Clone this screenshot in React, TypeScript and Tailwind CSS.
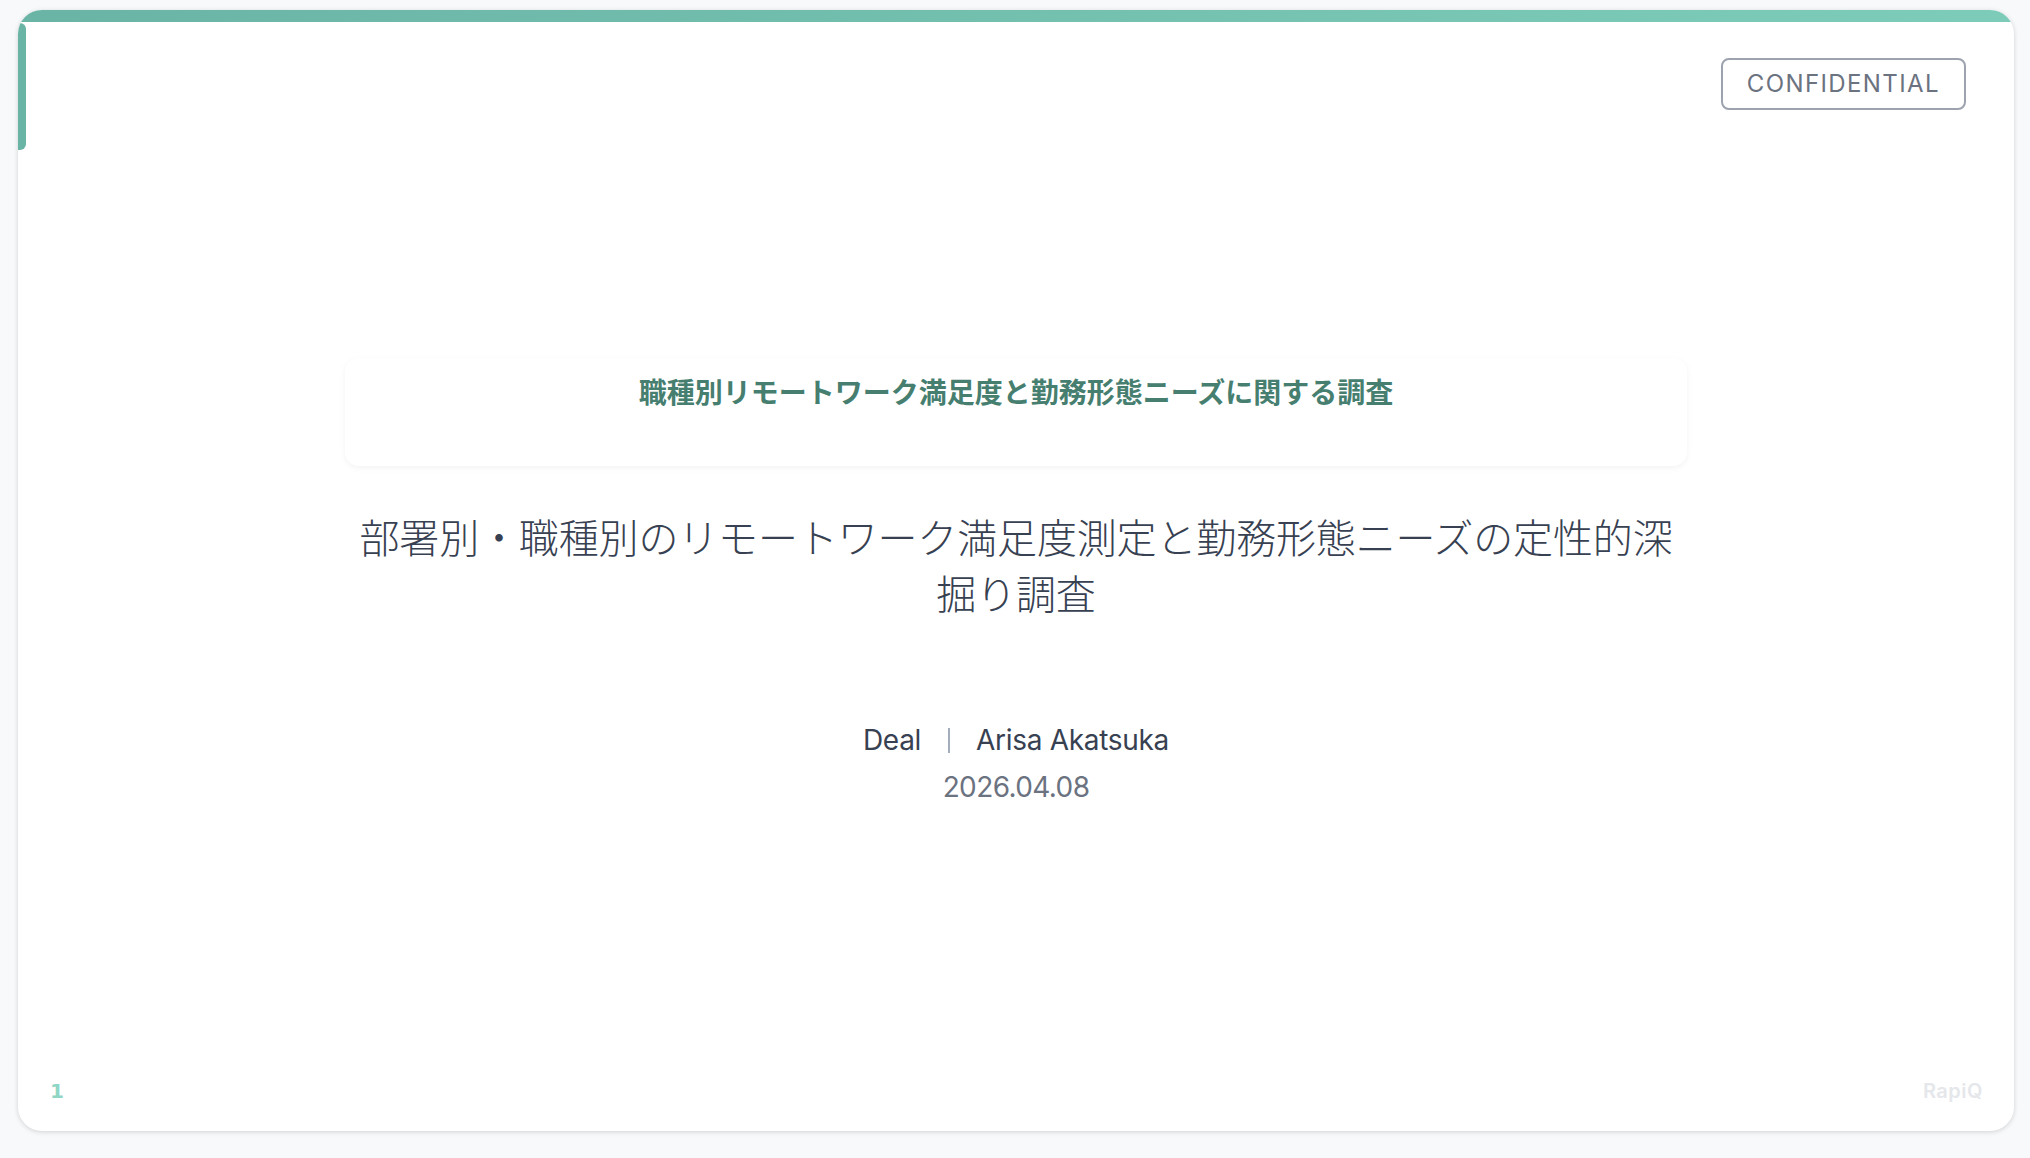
export default function App() {
  const jp = 'font-["Inter","Noto_Sans_CJK_JP",sans-serif]';
  return (
    <div className={`h-[1158px] w-full bg-[#f8f9fb] pl-[18px] pr-[16px] pt-[10px] pb-[27px] ${jp}`}>
      <div className="relative flex h-full flex-col items-center overflow-hidden rounded-[24px] bg-white pt-[348px] shadow-[0_1px_5px_rgba(0,0,0,0.16)]">
        <div className="absolute left-0 right-0 top-0 h-[12px] bg-gradient-to-r from-[#6ab4a5] to-[#7dccb9]" />
        <div className="absolute left-0 top-[13px] h-[127px] w-[8px] rounded-r-[6px] bg-[#6ab4a5]" />
        <div className="absolute right-[48px] top-[48px] rounded-[8px] border-2 border-[#9ca3af] px-[24px] py-[6px] text-[24px] leading-[36px] tracking-[1.4px] text-[#6b7280]">
          CONFIDENTIAL
        </div>

        <div className="h-[108px] w-[1342px] rounded-[14px] bg-white pt-[15px] text-center shadow-[0_2px_6px_rgba(0,0,0,0.05)]">
          <p className="text-[28px] font-semibold leading-[40px] text-[#467e6f]">
            職種別リモートワーク満足度と勤務形態ニーズに関する調査
          </p>
        </div>

        <h1 className="w-[1342px] pt-[45px] text-center text-[40px] font-light leading-[56px] tracking-[-0.15px] text-[#374151]">
          部署別・職種別のリモートワーク満足度測定と勤務形態ニーズの定性的深掘り調査
        </h1>

        <div className="mt-[93px] flex items-center text-[28px] leading-[48px] tracking-[-0.3px] text-[#374151]">
          <span>Deal</span>
          <span className="ml-[27px] mr-[26px] h-[25px] w-[2px] bg-[#a4adbc]" />
          <span>Arisa Akatsuka</span>
        </div>
        <div className="-mt-[1px] text-[28px] leading-[48px] tracking-[-0.6px] text-[#6b7280]">2026.04.08</div>

        <span className='absolute bottom-[28px] left-[32px] font-["DejaVu_Sans",sans-serif] text-[20px] font-bold leading-[24px] text-[#8fd6c5]'>1</span>
        <span className="absolute bottom-[28px] right-[31px] text-[20px] font-semibold leading-[24px] tracking-[0.5px] text-[#e5e7eb]">RapiQ</span>
      </div>
    </div>
  );
}
